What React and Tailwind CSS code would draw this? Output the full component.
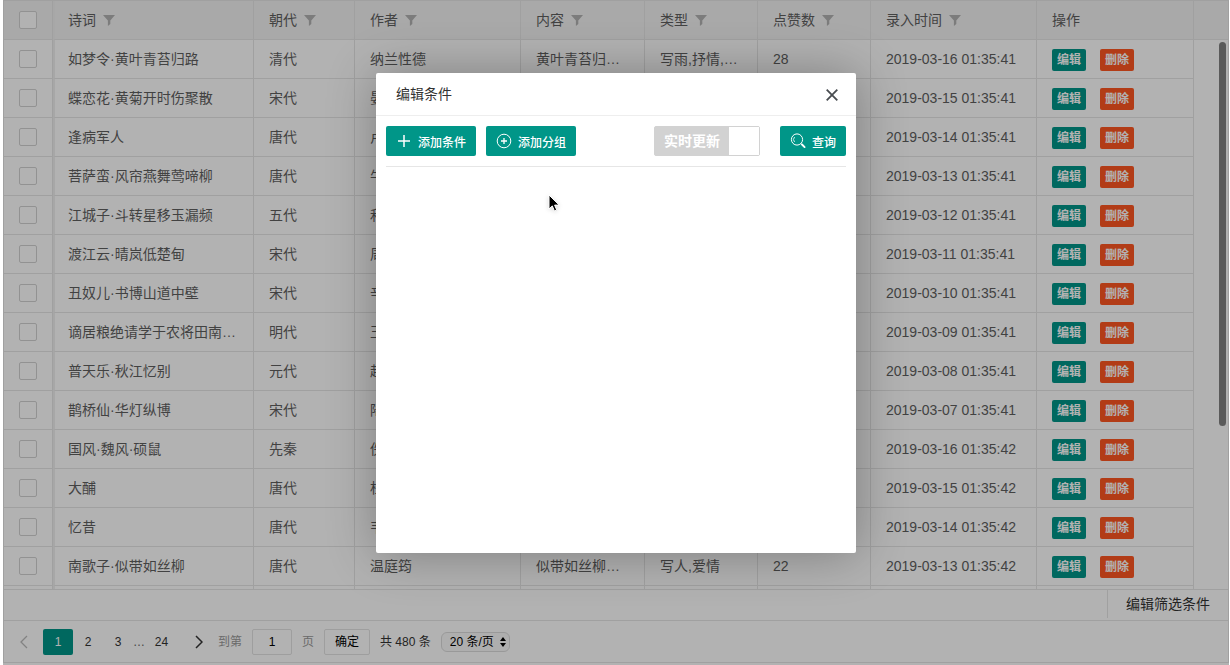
import React from "react";

const rows = [
  ["如梦令·黄叶青苔归路", "清代", "纳兰性德", "黄叶青苔归…", "写雨,抒情,…", "28", "2019-03-16 01:35:41"],
  ["蝶恋花·黄菊开时伤聚散", "宋代", "晏殊", "", "", "", "2019-03-15 01:35:41"],
  ["逢病军人", "唐代", "卢纶", "", "", "", "2019-03-14 01:35:41"],
  ["菩萨蛮·风帘燕舞莺啼柳", "唐代", "牛峤", "", "", "", "2019-03-13 01:35:41"],
  ["江城子·斗转星移玉漏频", "五代", "和凝", "", "", "", "2019-03-12 01:35:41"],
  ["渡江云·晴岚低楚甸", "宋代", "周邦彦", "", "", "", "2019-03-11 01:35:41"],
  ["丑奴儿·书博山道中壁", "宋代", "辛弃疾", "", "", "", "2019-03-10 01:35:41"],
  ["谪居粮绝请学于农将田南…", "明代", "王守仁", "", "", "", "2019-03-09 01:35:41"],
  ["普天乐·秋江忆别", "元代", "赵善庆", "", "", "", "2019-03-08 01:35:41"],
  ["鹊桥仙·华灯纵博", "宋代", "陆游", "", "", "", "2019-03-07 01:35:41"],
  ["国风·魏风·硕鼠", "先秦", "佚名", "", "", "", "2019-03-16 01:35:42"],
  ["大酺", "唐代", "杜审言", "", "", "", "2019-03-15 01:35:42"],
  ["忆昔", "唐代", "韦庄", "", "", "", "2019-03-14 01:35:42"],
  ["南歌子·似带如丝柳", "唐代", "温庭筠", "似带如丝柳…", "写人,爱情", "22", "2019-03-13 01:35:42"],
];

const headers = ["诗词", "朝代", "作者", "内容", "类型", "点赞数", "录入时间"];

const cell = "h-[39px] border-r border-b border-[#e6e6e6] px-[15px] text-left font-normal whitespace-nowrap overflow-hidden";
const frozenEdge = "border-l-2 border-l-[#f0f0f0] pl-[13px]";

function Funnel() {
  return (
    <svg className="h-[11px] w-3" viewBox="0 0 12 11" fill="#b2b2b2" aria-hidden="true">
      <path d="M0 0h12L7.3 5.4V9L4.9 11V5.4z" />
    </svg>
  );
}

function Check({ label }) {
  return (
    <input
      type="checkbox"
      aria-label={label}
      className="block h-[18px] w-[18px] appearance-none rounded-xs border border-[#d2d2d2] bg-white"
    />
  );
}

function DataTable() {
  return (
    <div className="relative min-h-0 flex-1 overflow-hidden border-b border-[#e6e6e6]">
      <table className="w-full table-fixed border-separate border-spacing-0 text-sm text-[#5f5f5f]">
        <colgroup>
          <col className="w-[49px]" />
          <col className="w-[201px]" />
          <col className="w-[101px]" />
          <col className="w-[166px]" />
          <col className="w-[124px]" />
          <col className="w-[113px]" />
          <col className="w-[113px]" />
          <col className="w-[166px]" />
          <col className="w-[157px]" />
          <col />
        </colgroup>
        <thead className="bg-[#f2f2f2]">
          <tr>
            <th className={cell}><Check label="全选" /></th>
            {headers.map((h, i) => (
              <th key={h} className={i === 0 ? `${cell} ${frozenEdge}` : cell}>
                <span className="flex items-center gap-[7px]">
                  {h}
                  <Funnel />
                </span>
              </th>
            ))}
            <th className={cell}>操作</th>
            <td className="border-b border-[#e6e6e6]" />
          </tr>
        </thead>
        <tbody>
          {rows.map((r) => (
            <tr key={r[0]}>
              <td className={cell}><Check label={r[0]} /></td>
              {r.map((v, i) => (
                <td key={i} className={i === 0 ? `${cell} ${frozenEdge}` : cell}>{v}</td>
              ))}
              <td className={`${cell} pt-0.5`}>
                <span className="flex gap-3.5 text-xs font-bold text-white">
                  <button type="button" className="h-[22px] w-[34px] rounded-xs bg-[#009688]">编辑</button>
                  <button type="button" className="h-[22px] w-[34px] rounded-xs bg-[#ff5722]">删除</button>
                </span>
              </td>
              <td />
            </tr>
          ))}
          <tr aria-hidden="true">
            <td className={cell} />
            <td className={`${cell} ${frozenEdge}`} />
            {[1, 2, 3, 4, 5, 6, 7].map((i) => <td key={i} className={cell} />)}
            <td />
          </tr>
        </tbody>
      </table>
      <div className="absolute top-[41px] right-0.5 h-96 w-[7px] rounded-full bg-[#828282]" />
    </div>
  );
}

function Pagination() {
  const page = "h-[26px] w-[30px] rounded-xs";
  return (
    <nav className="flex h-[41px] items-center text-xs text-[#333]">
      <button type="button" aria-label="上一页" disabled className="flex w-[39px] justify-center text-[#bbb]">
        <svg className="h-3.5 w-2" viewBox="0 0 8 14" fill="none" stroke="currentColor" strokeWidth="1.3"><path d="M7 1L1 7l6 6" /></svg>
      </button>
      <button type="button" aria-current="page" className={`${page} bg-[#009688] text-white`}>1</button>
      <button type="button" className={page}>2</button>
      <button type="button" className={page}>3</button>
      <span className="w-2.5 text-center text-[#666]">…</span>
      <button type="button" className="h-[26px] w-[37px]">24</button>
      <button type="button" aria-label="下一页" className="flex w-[38px] justify-center">
        <svg className="h-3.5 w-2" viewBox="0 0 8 14" fill="none" stroke="currentColor" strokeWidth="1.5"><path d="M1 1l6 6-6 6" /></svg>
      </button>
      <label className="flex items-center text-[#999]">
        到第
        <input
          type="text"
          defaultValue="1"
          className="mx-2.5 h-[26px] w-10 rounded-xs border border-[#e2e2e2] bg-white text-center text-black"
        />
        页
      </label>
      <button type="button" className="ml-2.5 h-[26px] w-[46px] rounded-xs border border-[#e2e2e2] bg-white text-black">确定</button>
      <span className="ml-2.5">共 480 条</span>
      <span className="relative ml-2.5 flex items-center">
        <select aria-label="每页条数" className="h-5 w-[69px] appearance-none rounded-md border border-[#dcdcdc] bg-[#fafafa] pl-2 text-black">
          <option>20 条/页</option>
        </select>
        <svg className="pointer-events-none absolute right-1 h-2.5 w-1.5" viewBox="0 0 6 10" aria-hidden="true">
          <path d="M3 0l3 4H0zM3 10L0 6h6z" />
        </svg>
      </span>
    </nav>
  );
}

function ConditionDialog() {
  const btn = "flex h-[30px] items-center gap-1.5 rounded-xs bg-[#009688] px-2.5 font-medium";
  return (
    <section
      role="dialog"
      aria-labelledby="dialog-title"
      className="relative h-[480px] w-[480px] rounded-xs bg-white shadow-[1px_1px_50px_rgba(0,0,0,0.3)]"
    >
      <header className="flex h-[43px] items-center justify-between border-b border-[#eee] px-5 text-sm text-[#333]">
        <h2 id="dialog-title">编辑条件</h2>
        <button type="button" aria-label="关闭" className="-mr-1.5 pt-0.5 pr-1">
          <svg className="h-3 w-3" viewBox="0 0 12 12" fill="none" stroke="#484c50" strokeWidth="1.8"><path d="M.7.7l10.6 10.6M11.3.7L.7 11.3" /></svg>
        </button>
      </header>
      <div className="mx-2.5 flex border-b border-[#e6e6e6] py-2.5 text-xs text-white">
        <button type="button" className={btn}>
          <svg className="h-4 w-4" viewBox="0 0 16 16" fill="none" stroke="currentColor" strokeWidth="1.5" aria-hidden="true"><path d="M2 8h12M8 2v12" /></svg>
          <span className="pt-1">添加条件</span>
        </button>
        <button type="button" className={`${btn} ml-2.5`}>
          <svg className="h-4 w-4" viewBox="0 0 16 16" fill="none" stroke="currentColor" aria-hidden="true">
            <circle cx="8" cy="8" r="6.8" />
            <path d="M5 8h6M8 5v6" strokeWidth="1.3" />
          </svg>
          <span className="pt-1">添加分组</span>
        </button>
        <label className="ml-auto flex h-[30px] items-center rounded-xs border border-[#d2d2d2] bg-[#d2d2d2] text-sm font-bold">
          <input type="checkbox" role="switch" className="sr-only" />
          <span className="px-[9px]">实时更新</span>
          <span className="h-7 w-[30px] bg-white" />
        </label>
        <button type="button" className={`${btn} ml-5`}>
          <svg className="h-4 w-4" viewBox="0 0 16 16" fill="none" stroke="currentColor" aria-hidden="true">
            <circle cx="7" cy="6.5" r="5.6" />
            <path d="M4.6 9A3.6 3.6 0 0 1 4.6 4" strokeWidth=".8" />
            <path d="M11 10.5l1 1" />
            <path d="M12 11.5l2.6 2.6" strokeWidth="1.9" strokeLinecap="round" />
          </svg>
          <span className="pt-1">查询</span>
        </button>
      </div>
      <svg className="absolute top-[121px] left-[172px] h-5 w-3.5 drop-shadow-sm" viewBox="0 0 14 20" aria-hidden="true">
        <path d="M1 1v14l3.3-3.1 2.1 5 2.3-1-2.1-4.8h4.6z" stroke="#fff" strokeWidth="1" />
      </svg>
    </section>
  );
}

export default function App() {
  return (
    <div className="relative mr-px ml-[3px] flex h-screen flex-col overflow-hidden bg-white pb-0.5 font-['Liberation_Sans','Noto_Sans_CJK_SC',sans-serif]">
      <main className="flex min-h-0 flex-1 flex-col border border-[#e6e6e6]">
        <DataTable />
        <div className="flex h-[31px] items-start justify-end border-b border-[#e6e6e6]">
          <button type="button" className="h-7 border-l border-[#e6e6e6] px-[18px] text-sm text-[#333]">编辑筛选条件</button>
        </div>
        <Pagination />
      </main>
      <div className="absolute inset-0 flex items-start justify-center bg-black/30 pt-[73px]">
        <ConditionDialog />
      </div>
    </div>
  );
}
